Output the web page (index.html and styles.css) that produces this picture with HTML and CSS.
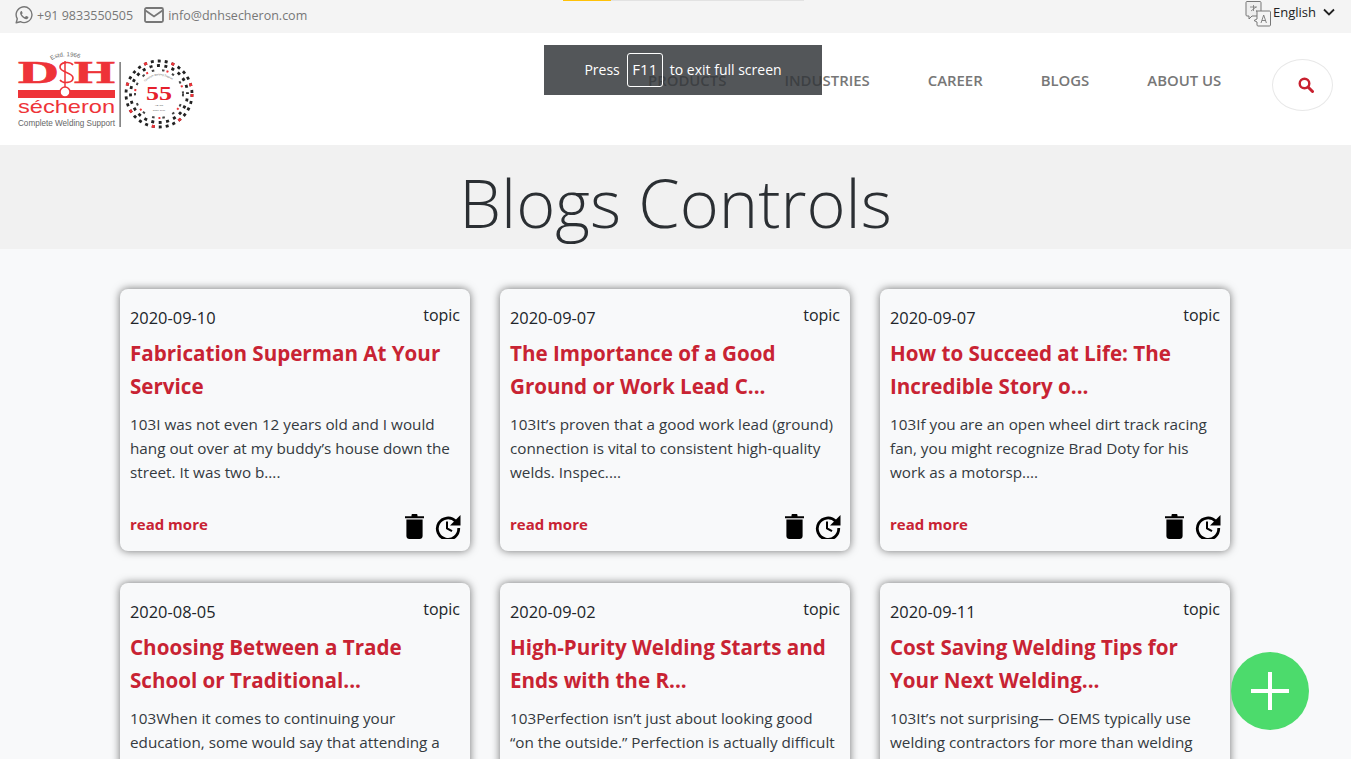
FILE: index.html
```html
<!DOCTYPE html>
<html>

<head>
  <meta name="viewport" content="width=device-width, initial-scale=1">
  <meta charset="UTF-8">
  <title>Blogs Controls</title>
  <link rel="stylesheet" href="styles.css">
</head>

<body>
  <svg class="defs" width="0" height="0">
    <symbol id="trash" viewBox="0 0 19 25">
      <path d="M6.5 2.200V1.200C6.500.5 7 0 7.700 0h3.600c.7 0 1.200.5 1.200 1.200v1H19v2H0v-2z" />
      <path d="M1.400 5.600h16.200V22c0 1.700-1.300 3-3 3H4.400c-1.700 0-3-1.300-3-3z" />
    </symbol>
    <symbol id="history" viewBox="0 0 26 25">
      <path d="M20.800 7.300A10.700 10.700 0 1 0 23.700 14" fill="none" stroke="#000" stroke-width="2.800" />
      <path d="M25.500 1v10.500H15z" />
      <path d="M12 7.500v6.800l5 2.900" fill="none" stroke="#000" stroke-width="2" />
    </symbol>
  </svg>

  <div class="loader"><span class="loader-fill"></span></div>

  <div class="topbar">
    <div class="contact">
      <svg class="ic-wa" viewBox="0 0 18 18">
        <path d="M1.200 16.800l1.100-4A7.900 7.900 0 1 1 5.400 15.700z" fill="none" stroke="#777" stroke-width="1.400" stroke-linejoin="round" />
        <path d="M6.400 4.900c-.4 0-1.300.7-1.300 2.100 0 2.700 3.400 6 6.100 6.200 1.300.1 2.200-.9 2.200-1.600 0-.5-.1-.7-.3-.8l-1.700-.8c-.3-.1-.5 0-.7.200l-.6.700c-.2.200-.4.200-.6.100-1.100-.5-2-1.300-2.600-2.400-.1-.2-.1-.4.100-.6l.5-.6c.1-.2.100-.4 0-.6l-.7-1.700c-.1-.2-.3-.2-.4-.2z" fill="#777" />
      </svg>
      <span class="contact-txt">+91 9833550505</span>
      <svg class="ic-mail" viewBox="0 0 20 16">
        <rect x="1" y="1" width="18" height="14" rx="1.500" fill="none" stroke="#777" stroke-width="1.800" />
        <path d="M1.500 3.500L10 9.500l8.500-6" fill="none" stroke="#777" stroke-width="1.800" />
      </svg>
      <span class="contact-txt">info@dnhsecheron.com</span>
    </div>
    <div class="lang">
      <svg class="ic-lang" viewBox="0 0 26 26" fill="none" stroke="#777" stroke-width="1">
        <path d="M2 .5h13c.6 0 1 .4 1 1V14c0 .6-.4 1-1 1H7l-3 3v-3H2c-.6 0-1-.4-1-1V1.500c0-.6.400-1 1-1z" fill="#eee" />
        <path d="M11 10h13.500c.5 0 1 .4 1 1v13c0 .6-.5 1-1 1H13c-.6 0-1-.4-1-1v-3l-3-1.500 3-1.500v-7.500c0-.3-.4-.5-1-.5z" fill="#f4f4f4" />
        <path d="M5 6h7M8.500 4v6M6 10l5-4" stroke-width=".8" />
        <path d="M16 22l2.700-8 2.700 8M17 19.500h3.500" stroke-width=".9" />
      </svg>
      <span>English</span>
      <svg class="ic-chev" viewBox="0 0 12 8"><path d="M1 1.500l5 5 5-5" fill="none" stroke="#222" stroke-width="1.800" /></svg>
    </div>
  </div>

  <header class="header">
    <svg class="logo" viewBox="0 0 180 82">
      <path id="estd-arc" d="M35 12.500A16 5.500 0 0 1 66 12.500" fill="none" />
      <text class="logo-estd"><textPath href="#estd-arc">Estd. 1966</textPath></text>
      <text x="1" y="35" class="logo-dh" textLength="41" lengthAdjust="spacingAndGlyphs">D</text>
      <text x="57" y="35" class="logo-dh" textLength="41" lengthAdjust="spacingAndGlyphs">H</text>
      <path d="M48 13v29" stroke="#ee3338" stroke-width="1.500" />
      <path d="M56 17c-3-4-13-3-13 2 0 6 13 5 13 11 0 5-10 6-13 2" fill="none" stroke="#ee3338" stroke-width="1.600" />
      <rect x="1" y="42" width="97" height="8" fill="#ee3338" />
      <circle cx="48" cy="44" r="5" fill="#fff" stroke="#ee3338" stroke-width="1.500" />
      <text x="1" y="65" class="logo-sech" textLength="97" lengthAdjust="spacingAndGlyphs">sécheron</text>
      <text x="1" y="78" class="logo-sub" textLength="97" lengthAdjust="spacingAndGlyphs">Complete Welding Support</text>
      <rect x="102.500" y="14" width="1.200" height="65" fill="#555" />
      <circle cx="142" cy="46" r="33" class="ring ring-black" stroke-dasharray="3 4" />
      <circle cx="142" cy="46" r="28.500" class="ring ring-black" stroke-dasharray="3 4.500" stroke-dashoffset="3" />
      <circle cx="142" cy="46" r="24" class="ring ring-mix" stroke-dasharray="2.500 8" />
      <circle cx="142" cy="46" r="33" class="ring ring-red" stroke-dasharray="3 25" />
      <circle cx="142" cy="46" r="24" class="ring ring-red ring-thin" stroke-dasharray="2 19" stroke-dashoffset="6" />
      <path id="ring-arc" d="M128 34A19 19 0 0 1 157 34" fill="none" />
      <text class="logo-tiny"><textPath href="#ring-arc">Complete Welding Support</textPath></text>
      <text x="142" y="52" class="logo-55" text-anchor="middle" textLength="26" lengthAdjust="spacingAndGlyphs">55</text>
      <text x="142" y="58" class="logo-tiny" text-anchor="middle">YEARS</text>
      <text x="142" y="63" class="logo-tiny" text-anchor="middle">Since 1966</text>
    </svg>
    <nav class="nav">
      <a>PRODUCTS</a>
      <a>INDUSTRIES</a>
      <a>CAREER</a>
      <a>BLOGS</a>
      <a>ABOUT US</a>
    </nav>
    <button class="search">
      <svg viewBox="0 0 16 16" width="16" height="16">
        <circle cx="6.500" cy="6.500" r="4.800" fill="none" stroke="#c8202f" stroke-width="2.400" />
        <path d="M10 10l4.500 4.500" stroke="#c8202f" stroke-width="3" stroke-linecap="round" />
      </svg>
    </button>
  </header>

  <div class="band">
    <h1 class="band-title">Blogs Controls</h1>
  </div>

  <main class="grid">
    <div class="card">
      <div class="card-top"><span class="date">2020-09-10</span><span class="topic">topic</span></div>
      <h2 class="card-title">Fabrication Superman At Your Service</h2>
      <p class="excerpt">103I was not even 12 years old and I would hang out over at my buddy’s house down the street. It was two b....</p>
      <div class="card-foot">
        <a class="more">read more</a>
        <svg class="ic-trash"><use href="#trash" /></svg>
        <svg class="ic-history"><use href="#history" /></svg>
      </div>
    </div>
    <div class="card">
      <div class="card-top"><span class="date">2020-09-07</span><span class="topic">topic</span></div>
      <h2 class="card-title">The Importance of a Good Ground or Work Lead C...</h2>
      <p class="excerpt">103It’s proven that a good work lead (ground) connection is vital to consistent high-quality welds. Inspec....</p>
      <div class="card-foot">
        <a class="more">read more</a>
        <svg class="ic-trash"><use href="#trash" /></svg>
        <svg class="ic-history"><use href="#history" /></svg>
      </div>
    </div>
    <div class="card">
      <div class="card-top"><span class="date">2020-09-07</span><span class="topic">topic</span></div>
      <h2 class="card-title">How to Succeed at Life: The Incredible Story o...</h2>
      <p class="excerpt">103If you are an open wheel dirt track racing fan, you might recognize Brad Doty for his work as a motorsp....</p>
      <div class="card-foot">
        <a class="more">read more</a>
        <svg class="ic-trash"><use href="#trash" /></svg>
        <svg class="ic-history"><use href="#history" /></svg>
      </div>
    </div>
    <div class="card">
      <div class="card-top"><span class="date">2020-08-05</span><span class="topic">topic</span></div>
      <h2 class="card-title">Choosing Between a Trade School or Traditional...</h2>
      <p class="excerpt">103When it comes to continuing your education, some would say that attending a</p>
    </div>
    <div class="card">
      <div class="card-top"><span class="date">2020-09-02</span><span class="topic">topic</span></div>
      <h2 class="card-title">High-Purity Welding Starts and Ends with the R...</h2>
      <p class="excerpt">103Perfection isn’t just about looking good “on the outside.” Perfection is actually difficult</p>
    </div>
    <div class="card">
      <div class="card-top"><span class="date">2020-09-11</span><span class="topic">topic</span></div>
      <h2 class="card-title">Cost Saving Welding Tips for Your Next Welding...</h2>
      <p class="excerpt">103It’s not surprising— OEMS typically use welding contractors for more than welding</p>
    </div>
  </main>

  <button class="fab">
    <svg viewBox="0 0 38 38" width="38" height="38"><path d="M19 0v38M0 19h38" stroke="#fff" stroke-width="4" /></svg>
  </button>

  <div class="fs-toast">
    <span class="fs-txt">Press</span><span class="fs-key">F11</span><span class="fs-txt">to exit full screen</span>
  </div>
</body>

</html>
```

FILE: styles.css
```css
html,
body {
  height: 759px;
  overflow: hidden;
}

body {
  margin: 0;
  background-color: #f8f9fa;
  font-family: "Open Sans", "Noto Sans", sans-serif;
  color: #212529;
}

.defs {
  position: absolute;
}

.loader {
  position: absolute;
  top: 0;
  left: 563px;
  width: 241px;
  height: 1px;
  background-color: #e2e2e2;
}

.loader-fill {
  display: block;
  width: 48px;
  height: 1px;
  background-color: #ffc107;
}

.topbar {
  display: flex;
  justify-content: space-between;
  height: 33px;
  padding: 0 16px 0 15px;
  background-color: #f4f4f4;
}

.contact {
  display: flex;
  align-items: center;
  height: 30px;
  font-size: 12.5px;
  color: #777;
}

.contact-txt {
  margin-left: 4px;
}

.ic-wa {
  width: 18px;
  height: 18px;
}

.ic-mail {
  width: 20px;
  height: 16px;
  margin-left: 11px;
}

.lang {
  display: flex;
  align-items: flex-start;
  height: 28px;
  font-size: 13px;
  line-height: 24px;
  color: #222;
}

.ic-lang {
  width: 26px;
  height: 26px;
  margin: 1px 2px 0 0;
}

.ic-chev {
  width: 12px;
  height: 8px;
  margin: 8px 0 0 7px;
}

.header {
  display: flex;
  align-items: flex-start;
  height: 112px;
  background-color: #fff;
}

.logo {
  width: 180px;
  height: 82px;
  margin: 15px 0 0 17px;
}

.logo-estd {
  font: 6px "Liberation Sans", sans-serif;
  fill: #666;
}

.logo-dh {
  font: bold 32px "Liberation Serif", serif;
  fill: #ee3338;
  stroke: #ee3338;
  stroke-width: 0.6;
}

.logo-sech {
  font: 19px "Liberation Sans", sans-serif;
  fill: #ee3338;
}

.logo-sub {
  font: 9px "Liberation Sans", sans-serif;
  fill: #666;
}

.logo-55 {
  font: bold 19px "Liberation Serif", serif;
  fill: #e5202c;
}

.logo-tiny {
  font: 2.5px "Liberation Sans", sans-serif;
  fill: #555;
}

.ring {
  fill: none;
  stroke-width: 2.8;
}

.ring-black {
  stroke: #222;
}

.ring-mix {
  stroke: #444;
  stroke-width: 2;
}

.ring-red {
  stroke: #ee3338;
}

.ring-thin {
  stroke-width: 2;
}

.nav {
  display: flex;
  gap: 58px;
  margin: 36px 0 0 451px;
  font-size: 14.9px;
  font-weight: 600;
  line-height: 23px;
  color: #777;
}

.search {
  display: flex;
  align-items: center;
  justify-content: center;
  box-sizing: border-box;
  width: 61px;
  height: 52px;
  margin: 26px 0 0 51px;
  padding: 0 0 0 7px;
  background-color: #fff;
  border: 1px solid #e8e8e8;
  border-radius: 50%;
}

.band {
  height: 104px;
  background-color: #f1f1f1;
}

.band-title {
  margin: 0;
  font-size: 66.7px;
  font-weight: 300;
  line-height: 116px;
  text-align: center;
  color: #2b2f33;
}

.grid {
  display: grid;
  grid-template-columns: repeat(3, 350px);
  gap: 32px 30px;
  padding: 40px 0 0 120px;
}

.card {
  display: flex;
  flex-direction: column;
  box-sizing: border-box;
  height: 262px;
  padding: 14px 10px 12px;
  background-color: #f8f9fa;
  border-radius: 8px;
  box-shadow: 0 0 8px rgba(0, 0, 0, 0.55);
}

.card-top {
  display: flex;
  justify-content: space-between;
  line-height: 24px;
}

.date {
  margin-top: 3px;
  font-size: 16.4px;
}

.topic {
  font-size: 16px;
}

.card-title {
  margin: 7px 0 9px;
  font-size: 20.6px;
  font-weight: 700;
  line-height: 33px;
  color: #c82333;
}

.excerpt {
  margin: 0;
  padding-right: 4px;
  font-size: 15.25px;
  line-height: 24px;
  color: #343a40;
}

.card-foot {
  display: flex;
  align-items: center;
  margin-top: auto;
}

.more {
  margin: 0 auto 5px 0;
  font-size: 15px;
  font-weight: 700;
  color: #c82333;
}

.ic-trash {
  width: 19px;
  height: 25px;
}

.ic-history {
  width: 26px;
  height: 25px;
  margin: 0 -1px 0 11px;
}

.fab {
  position: absolute;
  top: 652px;
  left: 1231px;
  display: flex;
  align-items: center;
  justify-content: center;
  width: 78px;
  height: 78px;
  padding: 0;
  background-color: #4cdb6c;
  border: 0;
  border-radius: 50%;
}

.fs-toast {
  position: absolute;
  top: 45px;
  left: 544px;
  display: flex;
  align-items: center;
  justify-content: center;
  gap: 7px;
  width: 278px;
  height: 50px;
  font-size: 14px;
  color: #fff;
  background-color: rgba(50, 54, 57, 0.84);
}

.fs-txt {
  padding-bottom: 2px;
}

.fs-key {
  display: flex;
  align-items: center;
  justify-content: center;
  box-sizing: border-box;
  width: 36px;
  height: 34px;
  padding-bottom: 2px;
  font-size: 15px;
  border: 1px solid #fff;
  border-radius: 3px;
}
```
